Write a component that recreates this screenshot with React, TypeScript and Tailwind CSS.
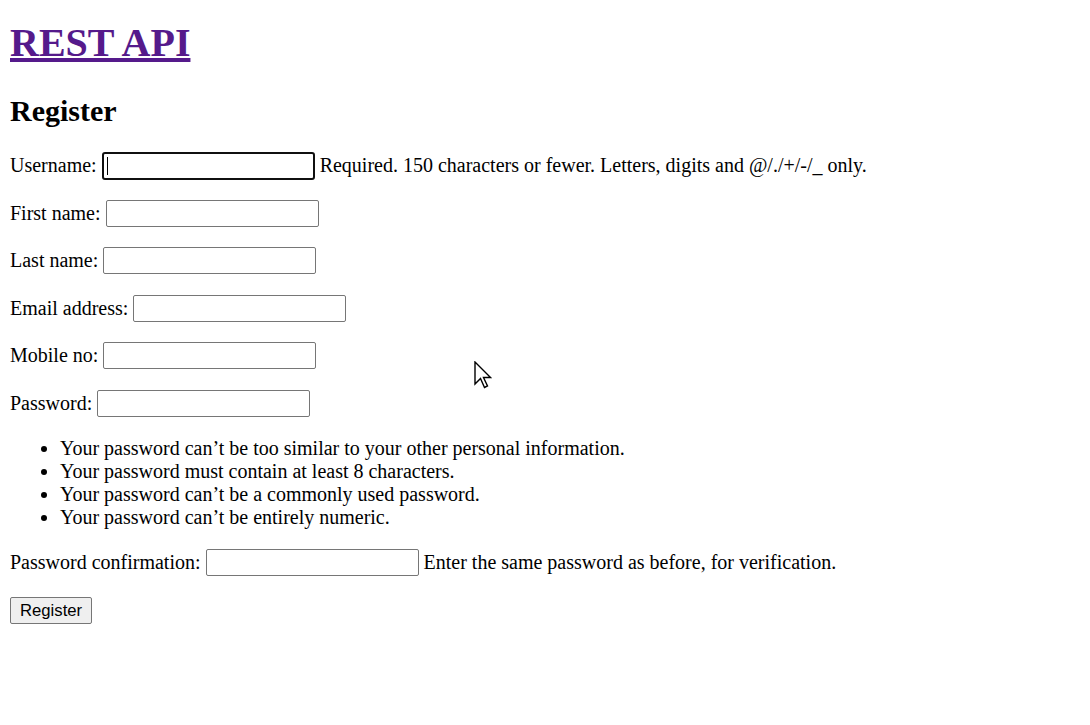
import React from 'react';

const fields = [
  { label: 'First name:', type: 'text' },
  { label: 'Last name:', type: 'text' },
  { label: 'Email address:', type: 'email' },
  { label: 'Mobile no:', type: 'text' },
  { label: 'Password:', type: 'password' },
];

const rules = [
  'Your password can’t be too similar to your other personal information.',
  'Your password must contain at least 8 characters.',
  'Your password can’t be a commonly used password.',
  'Your password can’t be entirely numeric.',
];

const inputCls =
  "w-[213px] h-[27px] border border-[#767676] rounded-[2px] bg-white px-[2px] font-['Liberation_Sans',sans-serif] text-[16.7px] outline-none";

const Row: React.FC<{ label: string; children: React.ReactNode; className?: string }> = ({ label, children, className }) => (
  <div className={`flex items-start h-[28px] ${className ?? ''}`}>
    <span className="leading-[27px] whitespace-pre">{label}&nbsp;</span>
    {children}
  </div>
);

export default function App() {
  return (
    <div className="relative min-h-screen bg-white text-black pl-[10px] font-['Liberation_Serif',serif] text-[20px] leading-[23px]">
      <h1 className="pt-[19.5px] text-[40px] leading-[46px] font-bold">
        <a href="#" className="text-[#551a8b] underline">REST API</a>
      </h1>
      <h2 className="mt-[27.5px] text-[30px] leading-[35px] font-bold">Register</h2>

      <form onSubmit={(e) => e.preventDefault()}>
        <Row label="Username:" className="mt-[24.3px]">
          <div className="relative">
            <input type="text" className="w-[213px] h-[28px] border-2 border-[#101010] rounded-[3px] bg-white px-[2px] outline-none" />
            <span className="absolute left-[5px] top-[5px] w-px h-[18px] bg-black" />
          </div>
          <span className="leading-[27px] whitespace-pre"> Required. 150 characters or fewer. Letters, digits and @/./+/-/_ only.</span>
        </Row>

        {fields.map((f) => (
          <Row key={f.label} label={f.label} className="mt-[19.5px]">
            <input type={f.type} className={inputCls} />
          </Row>
        ))}

        <ul className="mt-[19px] pl-[50px] list-disc">
          {rules.map((r) => (
            <li key={r}>{r}</li>
          ))}
        </ul>

        <Row label="Password confirmation:" className="mt-[20px]">
          <input type="password" className={inputCls} />
          <span className="leading-[27px] whitespace-pre"> Enter the same password as before, for verification.</span>
        </Row>

        <div className="mt-[20px]">
          <button type="submit" className="h-[27px] px-[9px] border border-[#767676] rounded-[2px] bg-[#efefef] font-['Liberation_Sans',sans-serif] text-[16.7px] leading-[25px]">
            Register
          </button>
        </div>
      </form>

      {/* mouse pointer */}
      <svg className="absolute left-[474px] top-[361px]" width="18" height="29" viewBox="0 0 18 29">
        <path d="M1 1 L1 23 L6.5 17.5 L10.5 26.5 L13.5 25 L9.5 16.5 L16.5 16.5 Z" fill="white" stroke="black" strokeWidth="1.4" strokeLinejoin="miter" />
      </svg>
    </div>
  );
}
